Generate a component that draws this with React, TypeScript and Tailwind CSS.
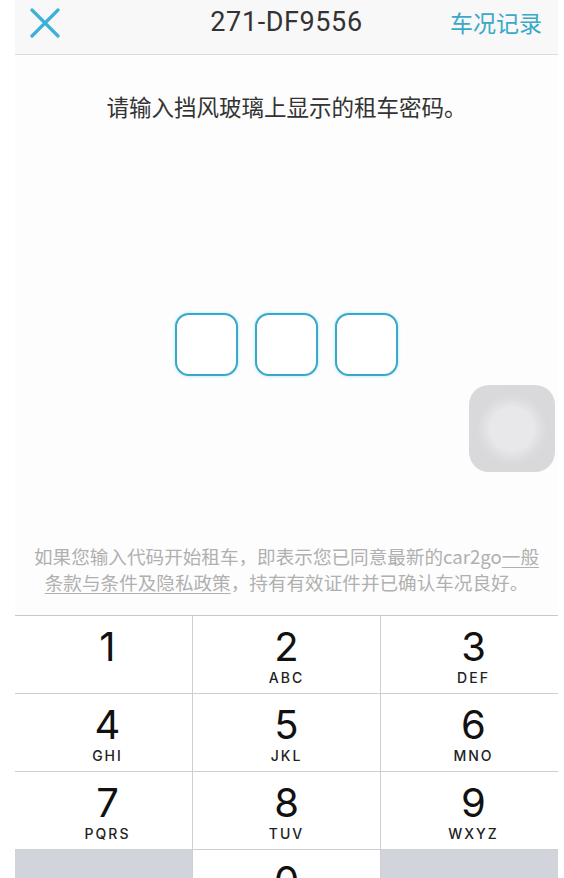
import React from 'react'

const keys = [
  { n: '1', l: '' },
  { n: '2', l: 'ABC' },
  { n: '3', l: 'DEF' },
  { n: '4', l: 'GHI' },
  { n: '5', l: 'JKL' },
  { n: '6', l: 'MNO' },
  { n: '7', l: 'PQRS' },
  { n: '8', l: 'TUV' },
  { n: '9', l: 'WXYZ' },
]

const cjk = { fontFamily: '"Noto Sans CJK SC", "Noto Sans", sans-serif' }
const inter = { fontFamily: 'Inter, sans-serif' }

export default function App() {
  return (
    <div className="relative h-[878px] w-[564px] overflow-hidden bg-white pl-[15px] pr-[6px]">
      <div className="flex h-full flex-col bg-[#fdfdfd]">
        {/* top bar */}
        <div className="flex h-[55px] shrink-0 items-start border-b border-[#dcdcdc] bg-[#f8f8f8] pt-[6px]">
          <div className="w-[110px] pl-[15px] pt-[2px]">
            <svg width="30" height="30" viewBox="0 0 30 30" fill="none">
              <path d="M2 2 L28 28 M28 2 L2 28" stroke="#3cb0d9" strokeWidth="3.2" strokeLinecap="round" />
            </svg>
          </div>
          <div className="flex-1 text-center text-[27px] leading-[32px] tracking-[0.6px] text-[#333]" style={{ fontFamily: 'Roboto, sans-serif' }}>
            271-DF9556
          </div>
          <div className="w-[110px] pr-[16px] pt-[1px] text-right text-[23px] leading-[30px] text-[#3aa9c9]" style={cjk}>
            车况记录
          </div>
        </div>

        <p className="mt-[36px] text-center text-[22.5px] leading-[30px] text-[#333]" style={cjk}>
          请输入挡风玻璃上显示的租车密码。
        </p>

        <div className="mt-[192px] flex justify-center gap-[17px]">
          {[0, 1, 2].map(i => (
            <div key={i} className="h-[63px] w-[63px] rounded-[14px] border-2 border-[#3aa8c8] bg-white shadow-[0_0_3px_rgba(60,200,230,0.5)]" />
          ))}
        </div>

        <p className="mt-[167px] text-center text-[18.6px] leading-[26px] text-[#b0b0b0]" style={cjk}>
          如果您输入代码开始租车，即表示您已同意最新的car2go<span className="underline underline-offset-[3px]">一般</span>
          <br />
          <span className="underline underline-offset-[3px]">条款与条件及隐私政策</span>，持有有效证件并已确认车况良好。
        </p>

        {/* keypad */}
        <div className="mt-[20px] grid grid-cols-[178px_188px_1fr] border-t border-[#c8c8c8]">
          {keys.map((k, i) => (
            <div
              key={k.n}
              className={`flex h-[78px] flex-col items-center border-b border-[#cfcfcf] bg-white pt-[8px] ${i % 3 !== 2 ? 'border-r' : ''} ${i % 3 !== 1 ? 'pl-[8px]' : ''}`}
            >
              <span className="text-[40px] leading-[46px] text-[#111]" style={inter}>{k.n}</span>
              <span className="text-[14px] font-medium leading-[16px] tracking-[2px] text-[#222]" style={inter}>
                {k.l}
              </span>
            </div>
          ))}
          <div className="h-[78px] border-r border-[#cfcfcf] bg-[#d1d4da]" />
          <div className="flex h-[78px] flex-col items-center border-r border-[#cfcfcf] bg-white pt-[8px]">
            <span className="text-[40px] leading-[46px] text-[#111]" style={inter}>0</span>
          </div>
          <div className="h-[78px] bg-[#d1d4da]" />
        </div>
      </div>

      {/* assistive touch */}
      <div className="absolute left-[469px] top-[385px] flex h-[87px] w-[86px] items-center justify-center rounded-[20px] bg-[#d9d9db]">
        <div className="h-[46px] w-[46px] rounded-full bg-[#e8e8ea] shadow-[0_0_10px_6px_rgba(232,232,234,0.9)]" />
      </div>
    </div>
  )
}
